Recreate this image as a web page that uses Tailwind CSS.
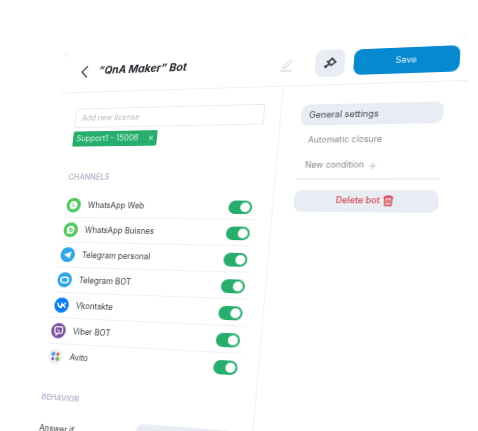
<!DOCTYPE html>
<html lang="en">
<head>
    <meta charset="UTF-8">
    <meta name="viewport" content="width=device-width, initial-scale=1.0">
    <title>QnA Maker Bot</title>
    <script src="https://cdn.jsdelivr.net/npm/@tailwindcss/browser@4"></script>
</head>
<body class="bg-white overflow-hidden">
<main class="relative w-[478px] h-[431px] overflow-hidden bg-white font-['Inter',sans-serif]">
    <!-- the whole card is laid out flat, then tilted with one matrix -->
    <div class="absolute left-0 top-0 w-[420px] h-[430px] origin-top-left blur-[0.6px] [transform:matrix3d(0.8286,-0.05296,0,-0.00028871,-0.11786,0.8472,0,-0.00015063,0,0,1,0,65,53,0,1)]">
        <span class="absolute left-0 top-0 w-[5px] h-[5px] border-l border-t border-[#dcdee1] rounded-tl-md"></span>
        <span class="absolute right-[2px] top-0 w-[5px] h-[5px] border-r border-t border-[#eef0f2] rounded-tr-md"></span>
        <header class="flex items-center h-[47px] pl-[20px] pr-[8px] border-b border-[#eceef1]">
            <svg class="w-[12px] h-[16px] text-[#33373d]" viewBox="0 0 12 16" fill="none" stroke="currentColor" stroke-width="1.4"><path d="M9 1.500 L3 8 L9 14.500"/></svg>
            <h1 class="ml-[10px] text-[11.500px] font-bold italic text-[#23262b]">“QnA Maker” Bot</h1>
            <svg class="ml-auto w-[16px] h-[16px] text-[#c6cad0]" viewBox="0 0 16 16" fill="none" stroke="currentColor" stroke-width="1"><path d="M4 10.500 L10.500 3.500 L12.500 5.500 L6 12 L4 12.500 Z M1.500 15 H13"/></svg>
            <button class="ml-[20px] w-[29px] h-[29px] rounded-lg bg-[#e8ecf3] flex items-center justify-center">
                <svg class="w-[16px] h-[16px] text-[#2f3338]" viewBox="0 0 16 16" fill="none" stroke="currentColor" stroke-width="1.600"><path d="M9.500 3.500 L13 7.500 L9 11 L5.800 7.500 Z M5.800 7.500 L4.500 6"/><circle cx="3.500" cy="12" r="1.500" fill="currentColor" stroke="none"/><path d="M3.500 12 L7 9.500"/></svg>
            </button>
            <button class="ml-[9px] w-[100px] h-[27px] rounded-lg bg-[#0789cf] text-[#cfe9f8] text-[8.500px] font-medium">Save</button>
        </header>
        <div class="flex h-[383px]">
            <section class="w-[244px] shrink-0 pl-[22px] pr-[16px] border-r border-[#f0f1f4]">
                <div class="mt-[18px] h-[22px] flex items-center px-[6px] border border-[#e8eaee] rounded-[2px] text-[8.400px] italic text-[#b8bcc3]">Add new license</div>
                <div class="mt-[4px] w-[94px] h-[17px] flex items-center justify-between pl-[4px] pr-[3px] rounded-[2px] bg-[#27ae6c] text-[8.600px] text-[#d6f3e4]">
                    <span>Support1 - 15006</span>
                    <span class="text-[11px] leading-none font-light">×</span>
                </div>
                <h2 class="mt-[28px] text-[8.400px] font-semibold text-[#b4bac8]">CHANNELS</h2>
                <ul class="mt-[11px]">
                    <li class="flex items-center h-[27px] pl-[2px] border-b border-[#f0f1f4]">
                        <svg class="w-[16px] h-[16px]" viewBox="0 0 16 16"><circle cx="8" cy="8" r="8" fill="#4cc95e"/><path d="M8 3.500 A4.500 4.500 0 1 1 5.500 11.800 L3.500 12.500 L4.200 10.500 A4.500 4.500 0 0 1 8 3.500 Z" fill="#fff"/><path d="M6.300 6 Q6 8 7.500 9.200 Q9 10.300 10.200 9.800 L9.500 8.700 L8.700 9 L7.200 7.500 L7.500 6.700 Z" fill="#4cc95e"/></svg>
                        <span class="ml-[8px] mt-[1px] text-[8.500px] text-[#3c4046]">WhatsApp Web</span>
                        <span class="ml-auto mr-[4px] mt-[2px] w-[24px] h-[14px] rounded-full bg-[#27ae6c] flex justify-end p-[2px]"><span class="w-[10px] h-[10px] rounded-full bg-white"></span></span>
                    </li>
                    <li class="flex items-center h-[27px] pl-[2px] border-b border-[#f0f1f4]">
                        <svg class="w-[16px] h-[16px]" viewBox="0 0 16 16"><circle cx="8" cy="8" r="8" fill="#4cc95e"/><path d="M8 3.500 A4.500 4.500 0 1 1 5.500 11.800 L3.500 12.500 L4.200 10.500 A4.500 4.500 0 0 1 8 3.500 Z" fill="#fff"/><path d="M7 5.500 V9.500 M7 8.500 A1.500 1.500 0 1 0 7 8.400" fill="none" stroke="#4cc95e" stroke-width="1.200"/></svg>
                        <span class="ml-[8px] mt-[1px] text-[8.500px] text-[#3c4046]">WhatsApp Buisnes</span>
                        <span class="ml-auto mr-[4px] mt-[2px] w-[24px] h-[14px] rounded-full bg-[#27ae6c] flex justify-end p-[2px]"><span class="w-[10px] h-[10px] rounded-full bg-white"></span></span>
                    </li>
                    <li class="flex items-center h-[27px] pl-[2px] border-b border-[#f0f1f4]">
                        <svg class="w-[16px] h-[16px]" viewBox="0 0 16 16"><circle cx="8" cy="8" r="8" fill="#2ea6e6"/><path d="M3.500 8 L12 4.500 L10.500 12 L8 10 L6.800 11 L6.500 9 Z" fill="#fff"/></svg>
                        <span class="ml-[8px] mt-[1px] text-[8.500px] text-[#3c4046]">Telegram personal</span>
                        <span class="ml-auto mr-[4px] mt-[2px] w-[24px] h-[14px] rounded-full bg-[#27ae6c] flex justify-end p-[2px]"><span class="w-[10px] h-[10px] rounded-full bg-white"></span></span>
                    </li>
                    <li class="flex items-center h-[27px] pl-[2px] border-b border-[#f0f1f4]">
                        <svg class="w-[16px] h-[16px]" viewBox="0 0 16 16"><circle cx="8" cy="8" r="8" fill="#2ea6e6"/><rect x="3.800" y="5.200" width="8.400" height="5.800" rx="2.800" fill="none" stroke="#fff" stroke-width="1.500"/></svg>
                        <span class="ml-[8px] mt-[1px] text-[8.500px] text-[#3c4046]">Telegram BOT</span>
                        <span class="ml-auto mr-[4px] mt-[2px] w-[24px] h-[14px] rounded-full bg-[#27ae6c] flex justify-end p-[2px]"><span class="w-[10px] h-[10px] rounded-full bg-white"></span></span>
                    </li>
                    <li class="flex items-center h-[27px] pl-[2px] border-b border-[#f0f1f4]">
                        <svg class="w-[16px] h-[16px]" viewBox="0 0 16 16"><circle cx="8" cy="8" r="8" fill="#0a7bf2"/><path d="M3.500 5.500 Q4.500 10.500 8 10.500 V5.500 M12.500 5.500 Q10.500 8 8 8 Q10.800 8 12.500 10.500" fill="none" stroke="#fff" stroke-width="1.500"/></svg>
                        <span class="ml-[8px] mt-[1px] text-[8.500px] text-[#3c4046]">Vkontakte</span>
                        <span class="ml-auto mr-[4px] mt-[2px] w-[24px] h-[14px] rounded-full bg-[#27ae6c] flex justify-end p-[2px]"><span class="w-[10px] h-[10px] rounded-full bg-white"></span></span>
                    </li>
                    <li class="flex items-center h-[27px] pl-[2px] border-b border-[#f0f1f4]">
                        <svg class="w-[16px] h-[16px]" viewBox="0 0 16 16"><circle cx="8" cy="8" r="8" fill="#7d4fa0"/><path d="M4.500 3.800 H11 Q12.500 3.800 12.500 5.500 V9 Q12.500 10.700 11 10.700 H8 L6 12.500 V10.700 Q4 10.700 4 9 V5.500 Q4 3.800 5.500 3.800 Z" fill="none" stroke="#fff" stroke-width="1.300"/><path d="M6.500 6 Q7 8.500 10 9" fill="none" stroke="#fff" stroke-width="1"/></svg>
                        <span class="ml-[8px] mt-[1px] text-[8.500px] text-[#3c4046]">Viber BOT</span>
                        <span class="ml-auto mr-[4px] mt-[2px] w-[24px] h-[14px] rounded-full bg-[#27ae6c] flex justify-end p-[2px]"><span class="w-[10px] h-[10px] rounded-full bg-white"></span></span>
                    </li>
                    <li class="flex items-center h-[27px] pl-[2px]">
                        <svg class="w-[16px] h-[16px]" viewBox="0 0 16 16"><circle cx="8" cy="8" r="8" fill="#f2f2f4"/><circle cx="5.500" cy="5.500" r="2.200" fill="#4aa3e0"/><circle cx="10.500" cy="5.500" r="1.700" fill="#e8504f"/><circle cx="5.500" cy="10.500" r="1.700" fill="#8a5cc8"/><circle cx="10.500" cy="10.500" r="2.200" fill="#7cc04b"/></svg>
                        <span class="ml-[8px] mt-[1px] text-[8.500px] text-[#3c4046]">Avito</span>
                        <span class="ml-auto mr-[4px] mt-[2px] w-[24px] h-[14px] rounded-full bg-[#27ae6c] flex justify-end p-[2px]"><span class="w-[10px] h-[10px] rounded-full bg-white"></span></span>
                    </li>
                </ul>
                <h2 class="mt-[22px] text-[8.200px] font-semibold text-[#b4bac8]">BEHAVIOR</h2>
                <div class="mt-[14px] pl-[2px] flex items-center">
                    <span class="text-[8.500px] text-[#3c4046]">Answer if</span>
                    <span class="ml-auto w-[100px] h-[24px] rounded-lg bg-[#e8ecf3]"></span>
                </div>
            </section>
            <section class="flex-1 pl-[20px] pr-[20px]">
                <div class="mt-[20px] h-[22px] flex items-center pl-[8px] rounded-lg bg-[#e8ecf3] text-[8.800px] text-[#43474d]">General settings</div>
                <div class="mt-[9px] pl-[9px] text-[8.400px] text-[#85898f]">Automatic closure</div>
                <div class="mt-[13px] pl-[8px] flex items-center gap-[4px] text-[8.400px] text-[#85898f]">New condition <span class="text-[13px] leading-none text-[#c3c6cb]">+</span></div>
                <div class="mt-[7px] border-t border-[#e4e6ea]"></div>
                <div class="mt-[11px] h-[22px] flex items-center justify-center gap-[3px] rounded-lg bg-[#e8ecf3] text-[8.500px] font-medium text-[#d8404a]">
                    Delete bot
                    <svg class="w-[10px] h-[11px]" viewBox="0 0 10 11" fill="none" stroke="currentColor" stroke-width="1.300"><path d="M0.500 2 H9.500 M3 2 V0.800 H7 V2 M1.500 2 L2.200 10 H7.800 L8.500 2 M4 4 V8 M6 4 V8"/></svg>
                </div>
            </section>
        </div>
    </div>
</main>
</body>
</html>
